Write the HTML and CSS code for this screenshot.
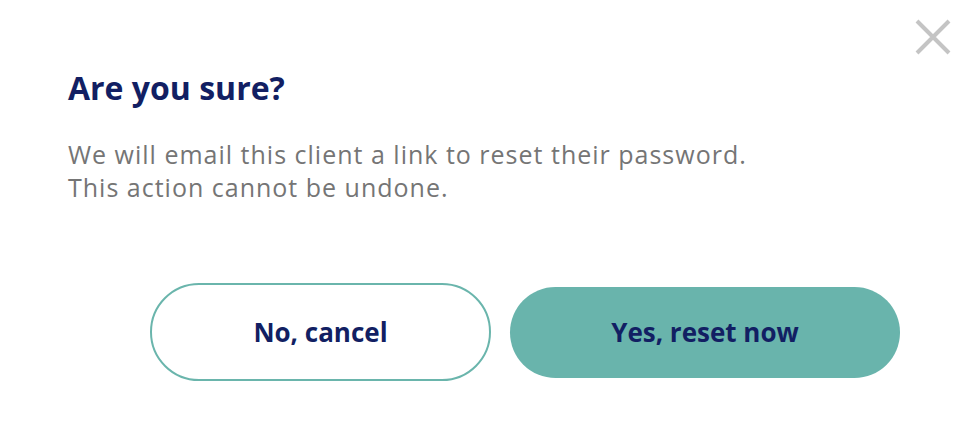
FILE: index.html
```html
<!DOCTYPE html>
<html>
  <head>
    <meta charset="UTF-8" />
    <title>Reset password</title>
    <link rel="stylesheet" href="styles.css">
  </head>
  <body>
    <div class="modal">
      <!-- Close icon -->
      <button class="close-btn" aria-label="Close">
        <svg width="38" height="38" viewBox="0 0 38 38">
          <path d="M3 3 L35 35 M35 3 L3 35" stroke="#c4c4c4" stroke-width="4" fill="none" />
        </svg>
      </button>

      <h2 class="modal-title">Are you sure?</h2>
      <p class="modal-text">
        We will email this client a link to reset their password.<br />
        This action cannot be undone.
      </p>

      <div class="modal-actions">
        <button class="btn btn-outline">No, cancel</button>
        <button class="btn btn-primary">Yes, reset now</button>
      </div>
    </div>
  </body>
</html>
```

FILE: styles.css
```css
body {
  font-family: "Open Sans", "Liberation Sans", Arial, sans-serif;
  margin: 0;
  padding: 0;
  background-color: #fff;
}

.modal {
  position: relative;
  width: 970px;
  height: 448px;
  padding: 64px 70px 0 68px;
  box-sizing: border-box;
}

.close-btn {
  position: absolute;
  top: 18px;
  right: 18px;
  padding: 0;
  border: none;
  background: none;
  cursor: pointer;
}

.close-btn svg {
  display: block;
}

.modal-title {
  margin: 0;
  font-size: 32px;
  line-height: 48px;
  font-weight: 700;
  color: #121f63;
}

.modal-text {
  margin: 26px 0 0;
  font-size: 25px;
  line-height: 33px;
  letter-spacing: 1px;
  color: #757575;
}

.modal-actions {
  display: flex;
  justify-content: flex-end;
  align-items: center;
  gap: 19px;
  margin-top: 79px;
}

.btn {
  font-family: inherit;
  font-size: 26px;
  font-weight: 700;
  color: #121f63;
  border-radius: 50px;
  cursor: pointer;
}

.btn-outline {
  width: 341px;
  height: 98px;
  background-color: #fff;
  border: 2px solid #6ab5ac;
}

.btn-primary {
  width: 390px;
  height: 91px;
  background-color: #69b4ac;
  border: none;
}

.btn-primary:hover {
  background-color: #5aa69e;
}
```
